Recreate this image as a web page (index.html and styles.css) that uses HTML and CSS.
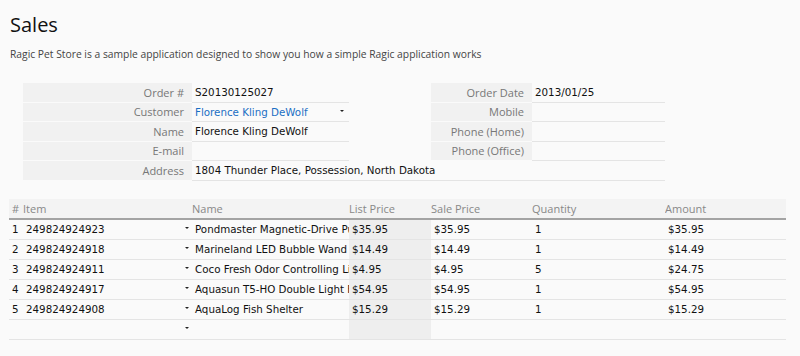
FILE: index.html
```html
<!DOCTYPE html>
<html>
<head>
	<title>Sales</title>
	<link rel="stylesheet" href="styles.css">
</head>
<body>
	<div class="page">
		<h1 class="title">Sales</h1>
		<p class="desc">Ragic Pet Store is a sample application designed to show you how a simple Ragic application works</p>

		<div class="form">
			<div class="lbl">Order #</div>
			<div class="val">S20130125027</div>
			<div class="gap"></div>
			<div class="lbl">Order Date</div>
			<div class="val">2013/01/25</div>

			<div class="lbl">Customer</div>
			<div class="val link"><span>Florence Kling DeWolf</span><span class="arrow"></span></div>
			<div class="gap"></div>
			<div class="lbl">Mobile</div>
			<div class="val"></div>

			<div class="lbl">Name</div>
			<div class="val">Florence Kling DeWolf</div>
			<div class="gap"></div>
			<div class="lbl">Phone (Home)</div>
			<div class="val"></div>

			<div class="lbl">E-mail</div>
			<div class="val"></div>
			<div class="gap"></div>
			<div class="lbl">Phone (Office)</div>
			<div class="val"></div>

			<div class="lbl">Address</div>
			<div class="val wide">1804 Thunder Place, Possession, North Dakota</div>
		</div>

		<div class="items">
			<div class="row head">
				<div class="c">#</div>
				<div class="c">Item</div>
				<div class="c">Name</div>
				<div class="c">List Price</div>
				<div class="c">Sale Price</div>
				<div class="c">Quantity</div>
				<div class="c">Amount</div>
			</div>
			<div class="row">
				<div class="c">1</div>
				<div class="c item"><span>249824924923</span><span class="arrow"></span></div>
				<div class="c">Pondmaster Magnetic-Drive Pump</div>
				<div class="c list">$35.95</div>
				<div class="c">$35.95</div>
				<div class="c">1</div>
				<div class="c">$35.95</div>
			</div>
			<div class="row">
				<div class="c">2</div>
				<div class="c item"><span>249824924918</span><span class="arrow"></span></div>
				<div class="c">Marineland LED Bubble Wand</div>
				<div class="c list">$14.49</div>
				<div class="c">$14.49</div>
				<div class="c">1</div>
				<div class="c">$14.49</div>
			</div>
			<div class="row">
				<div class="c">3</div>
				<div class="c item"><span>249824924911</span><span class="arrow"></span></div>
				<div class="c">Coco Fresh Odor Controlling Litter</div>
				<div class="c list">$4.95</div>
				<div class="c">$4.95</div>
				<div class="c">5</div>
				<div class="c">$24.75</div>
			</div>
			<div class="row">
				<div class="c">4</div>
				<div class="c item"><span>249824924917</span><span class="arrow"></span></div>
				<div class="c">Aquasun T5-HO Double Light Fixture</div>
				<div class="c list">$54.95</div>
				<div class="c">$54.95</div>
				<div class="c">1</div>
				<div class="c">$54.95</div>
			</div>
			<div class="row">
				<div class="c">5</div>
				<div class="c item"><span>249824924908</span><span class="arrow"></span></div>
				<div class="c">AquaLog Fish Shelter</div>
				<div class="c list">$15.29</div>
				<div class="c">$15.29</div>
				<div class="c">1</div>
				<div class="c">$15.29</div>
			</div>
			<div class="row">
				<div class="c"></div>
				<div class="c item"><span></span><span class="arrow"></span></div>
				<div class="c"></div>
				<div class="c list"></div>
				<div class="c"></div>
				<div class="c"></div>
				<div class="c"></div>
			</div>
		</div>
	</div>
</body>
</html>
```

FILE: styles.css
```css
body {
	margin: 0;
	background-color: #fafafa;
	font-family: "Open Sans", Arial, sans-serif;
	color: #111;
}
.page {
	padding: 0 9px;
}
.title {
	font-size: 20px;
	line-height: 24px;
	font-weight: normal;
	margin: 13px 0 0 1px;
	color: #111;
}
.desc {
	font-size: 10.3px;
	line-height: 14px;
	margin: 10px 0 0 1px;
	color: #444;
}

/* master form */
.form {
	display: grid;
	grid-template-columns: 169px 157px 82px 101px 133px;
	margin: 22px 0 0 14px;
}
.lbl, .val, .gap {
	height: 19.5px;
	box-sizing: border-box;
	display: flex;
	align-items: center;
}
.lbl {
	background-color: #f1f1f1;
	color: #777;
	font-size: 11px;
	justify-content: flex-end;
	padding-right: 8px;
	border-bottom: 1px solid #fafafa;
}
.val {
	font-family: "DejaVu Sans", Verdana, sans-serif;
	font-size: 10.3px;
	padding: 0 5px 0 3px;
	border-bottom: 1px solid #e4e4e4;
	justify-content: space-between;
}
.val.link {
	color: #1a6fc4;
}
.val.wide {
	grid-column: 2 / 6;
}
.arrow {
	width: 0;
	height: 0;
	border-left: 2px solid transparent;
	border-right: 2px solid transparent;
	border-top: 2px solid #222;
	margin-top: -2px;
}

/* subtable */
.items {
	margin-top: 18px;
	width: 777px;
}
.row {
	display: grid;
	grid-template-columns: 14px 169px 157px 82px 101px 133px 121px;
	height: 20px;
	box-sizing: border-box;
	border-bottom: 1px solid #e4e4e4;
}
.row.head {
	height: 21px;
	background-color: #f3f3f3;
	border-bottom: 2px solid #a3a3a3;
}
.c {
	display: flex;
	align-items: center;
	padding-left: 3px;
	font-family: "DejaVu Sans", Verdana, sans-serif;
	font-size: 10.3px;
	white-space: nowrap;
	overflow: hidden;
}
.head .c {
	font-family: "Open Sans", Arial, sans-serif;
	font-size: 11px;
	color: #888;
	padding-left: 0;
}
.row .c:first-child {
	padding-left: 3px;
}
.item {
	justify-content: space-between;
	padding-right: 3px;
}
.list {
	background-color: #eeeeee;
}
```
